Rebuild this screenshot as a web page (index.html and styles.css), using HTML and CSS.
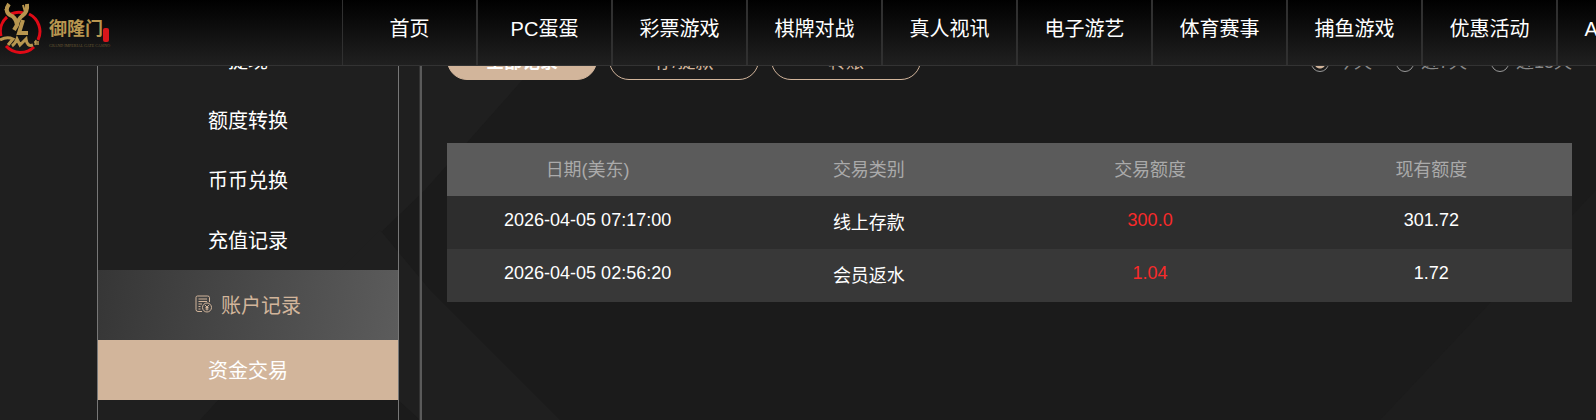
FILE: index.html
```html
<!DOCTYPE html>
<html lang="zh-CN">
<head>
    <meta charset="UTF-8">
    <meta name="viewport" content="width=device-width, initial-scale=1.0">
    <title>御隆门 - 账户记录</title>
    <link rel="stylesheet" href="styles.css">
</head>
<body>
    <header class="header">
        <a class="logo" href="#" aria-label="御隆门">
            <svg class="logo-mark" viewBox="0 0 42 54" width="42" height="54" aria-hidden="true">
                <path d="M7 17 A19 19 0 0 0 1 36 M11 14 Q18 11 23 13 M29 14 A19.500 19.500 0 0 1 38 40 M34 47 A19.500 19.500 0 0 1 6 46" fill="none" stroke="#e00a16" stroke-width="3"/>
                <path d="M9 4 Q4 11 10 15 Q16 17 17 25 M27 4 Q28 12 22 16 Q18 19 17 25 L14 30" fill="none" stroke="#b8964f" stroke-width="4"/>
                <path d="M5 9 L9 14 M23 5 L25 12" fill="none" stroke="#b8964f" stroke-width="2"/>
                <path d="M23 20 L19 33 H28" fill="none" stroke="#b8964f" stroke-width="4"/>
                <path d="M0 40 Q7 36 13 39 L8 45 M12 46 Q15 44 17 39 L20 45 L26 39 Q27 47 33 45" fill="none" stroke="#b8964f" stroke-width="3"/>
                <path d="M34 42 H39 M36 40 L35 45 M36 44 L39 44" fill="none" stroke="#b8964f" stroke-width="1.500"/>
            </svg>
            <span class="logo-text">
                <span class="logo-name">御隆门</span>
                <span class="logo-sub">GRAND IMPERIAL GATE CASINO</span>
            </span>
            <span class="logo-seal"></span>
        </a>
        <nav class="nav">
            <a href="#">首页</a>
            <a href="#">PC蛋蛋</a>
            <a href="#">彩票游戏</a>
            <a href="#">棋牌对战</a>
            <a href="#">真人视讯</a>
            <a href="#">电子游艺</a>
            <a href="#">体育赛事</a>
            <a href="#">捕鱼游戏</a>
            <a href="#">优惠活动</a>
            <a href="#">APP下载</a>
        </nav>
    </header>

    <div class="page">
        <svg class="page-bg" viewBox="0 0 1596 420" preserveAspectRatio="none" aria-hidden="true">
            <path d="M0 60 H540 L425 190 L300 310 L200 420 H0 Z" fill="#1f1f1f"/>
            <path d="M210 60 L380 230 L300 310 L420 420 H560 L430 290 L380 230 Z" fill="#1f1f1f"/>
            <path d="M1596 190 L1380 420 H1596 Z" fill="#1d1d1d"/>
        </svg>
        <aside class="sidebar">
            <a class="side-item" href="#">提现</a>
            <a class="side-item" href="#">额度转换</a>
            <a class="side-item" href="#">币币兑换</a>
            <a class="side-item" href="#">充值记录</a>
            <a class="side-item side-group" href="#">
                <svg class="side-icon" viewBox="0 0 18 18" width="18" height="18" aria-hidden="true">
                    <path d="M7 16.500 H3 Q1 16.500 1 14.500 V2.500 Q1 1 2.500 1 H12.500 Q14.500 1 14.500 2.500 V7 M3.500 4 H12 M3.500 6.500 H12 M3.500 9 H7 M3.500 11.500 H5.500 M3.500 14 H5.500"/>
                    <circle cx="12" cy="12.500" r="4.500"/>
                    <path d="M10 10 L12 12 L14 10 M12 12 V15.500 M10.500 12.500 H13.500 M10.500 14 H13.500"/>
                </svg>
                账户记录
            </a>
            <a class="side-item active" href="#">资金交易</a>
        </aside>

        <main class="content">
            <div class="toolbar">
                <div class="tabs">
                    <button class="tab active" type="button">全部记录</button>
                    <button class="tab" type="button">存/提款</button>
                    <button class="tab" type="button">转账</button>
                </div>
                <div class="ranges">
                    <label class="range"><input type="radio" name="range" checked>今天</label>
                    <label class="range"><input type="radio" name="range">近7天</label>
                    <label class="range"><input type="radio" name="range">近15天</label>
                </div>
            </div>

            <table class="records">
                <thead>
                    <tr>
                        <th>日期(美东)</th>
                        <th>交易类别</th>
                        <th>交易额度</th>
                        <th>现有额度</th>
                    </tr>
                </thead>
                <tbody>
                    <tr>
                        <td>2026-04-05 07:17:00</td>
                        <td>线上存款</td>
                        <td class="amount">300.0</td>
                        <td>301.72</td>
                    </tr>
                    <tr>
                        <td>2026-04-05 02:56:20</td>
                        <td>会员返水</td>
                        <td class="amount">1.04</td>
                        <td>1.72</td>
                    </tr>
                </tbody>
            </table>
        </main>
    </div>
</body>
</html>
```
FILE: styles.css
```css
* {
    box-sizing: border-box;
}
body {
    margin: 0;
    height: 100vh;
    overflow: hidden;
    background-color: #1b1b1b;
    color: #fff;
    font-family: "Liberation Sans", "Noto Sans CJK SC", sans-serif;
    font-size: 18px;
}
a {
    color: inherit;
    text-decoration: none;
}

/* fixed top bar */
.header {
    position: fixed;
    top: 0;
    left: 0;
    right: 0;
    z-index: 10;
    display: flex;
    height: 66px;
    overflow: hidden;
    background: linear-gradient(#000, #202020);
    border-bottom: 1px solid #333;
}
.logo {
    display: flex;
    flex: 0 0 342px;
    align-items: flex-start;
}
.logo-text {
    display: flex;
    flex-direction: column;
    width: 54px;
    margin: 16px 0 0 7px;
    color: #b8964f;
}
.logo-name {
    font-size: 18px;
    font-weight: bold;
    line-height: 26px;
}
.logo-sub {
    font-family: "Liberation Serif", serif;
    font-size: 4px;
    line-height: 8px;
    color: #6b5a35;
    white-space: nowrap;
}
.logo-seal {
    width: 6px;
    height: 14px;
    margin-top: 28px;
    border-radius: 2px;
    background-color: #d8161b;
}
.nav {
    display: flex;
}
.nav a {
    flex: 0 0 135px;
    border: solid #303030;
    border-width: 0 1px;
    font-size: 20px;
    line-height: 58px;
    text-align: center;
}

/* page scrolled under the top bar */
.page {
    position: relative;
    display: flex;
    min-height: 100vh;
    padding: 30px 24px 0 97px;
}
.page-bg {
    position: absolute;
    top: 0;
    left: 0;
    width: 100%;
    height: 100%;
    z-index: -1;
}
.sidebar {
    flex: 0 0 302px;
    border: solid #777;
    border-width: 0 1px;
}
.side-item {
    display: flex;
    align-items: center;
    justify-content: center;
    gap: 8px;
    height: 60px;
    padding-bottom: 2px;
    font-size: 20px;
}
.side-group {
    height: 70px;
    background: linear-gradient(100deg, #363636, #5c5c5c);
    color: #d2b59b;
}
.side-icon {
    fill: none;
    stroke: #d2b59b;
    stroke-width: 1;
}
.side-item.active {
    background-color: #d2b59b;
}
.content {
    flex: 1;
    margin-left: 21px;
    padding: 10px 0 0 25px;
    border-left: 2px solid #5a5a5a;
    box-shadow: -1px 0 #333;
}
.toolbar {
    display: flex;
    align-items: center;
    justify-content: space-between;
    margin-bottom: 63px;
}
.tabs {
    display: flex;
    gap: 12px;
}
.tab {
    width: 150px;
    height: 40px;
    border: 1px solid #d2b59b;
    border-radius: 20px;
    background: none;
    color: #d2b59b;
    font-family: inherit;
    font-size: 18px;
}
.tab.active {
    background-color: #d2b59b;
    color: #fff;
    font-weight: bold;
}
.ranges {
    display: flex;
    gap: 24px;
    color: #888;
}
.range {
    display: flex;
    align-items: center;
    gap: 7px;
}
.range input {
    appearance: none;
    width: 18px;
    height: 18px;
    margin: 6px 0 0;
    border: 1px solid #999;
    border-radius: 50%;
}
.range input:checked {
    background: radial-gradient(circle, #d2b59b 5px, transparent 6px);
}
.records {
    width: 100%;
    table-layout: fixed;
    border-collapse: collapse;
    text-align: center;
}
.records th,
.records td {
    height: 53px;
    padding: 0 0 4px;
}
.records th {
    background-color: #5b5b5b;
    color: #aaa;
    font-weight: normal;
}
.records td {
    background-color: #2d2d2d;
}
.records tr:nth-child(even) td {
    background-color: #383838;
}
.records .amount {
    color: #f82a2a;
}
```
